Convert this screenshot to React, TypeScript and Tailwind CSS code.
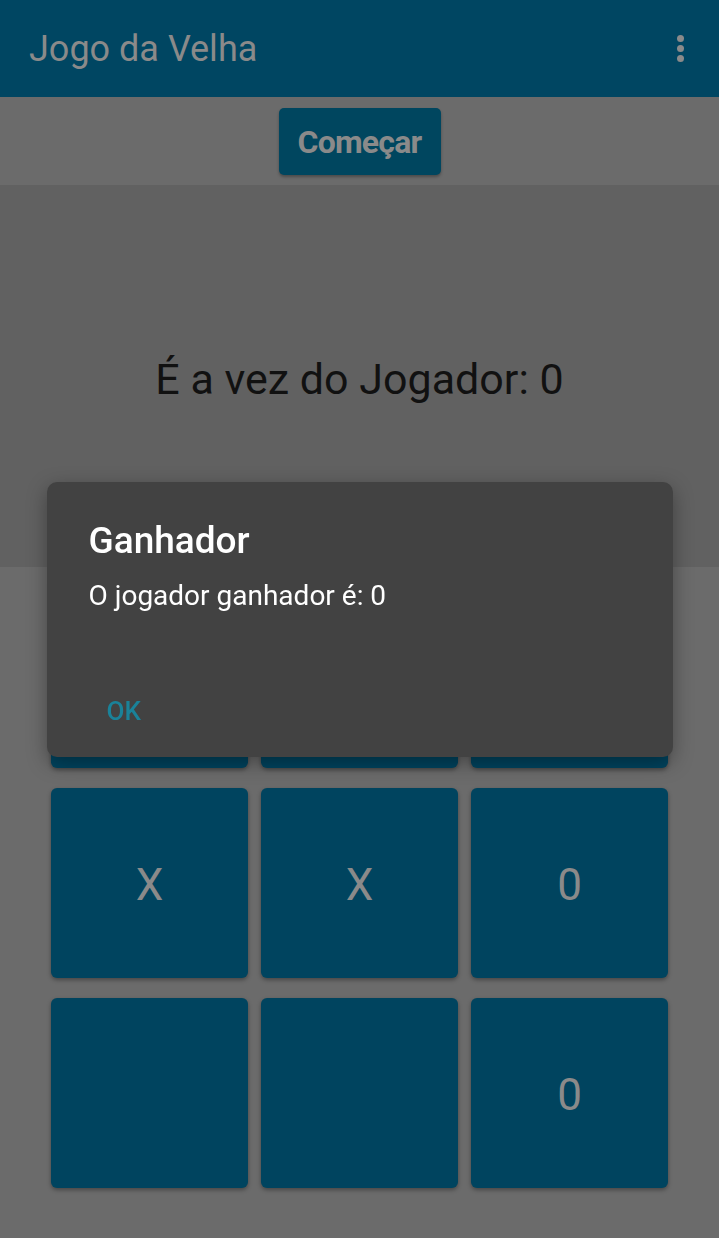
import { useState } from "react";

const cells = ["", "", "", "X", "X", "0", "", "", "0"];

export default function App() {
  const [open, setOpen] = useState(true);

  return (
    <div
      className="relative min-h-[1238px] w-full bg-[#6b6b6b] overflow-hidden"
      style={{ fontFamily: "Roboto, 'Noto Sans', sans-serif" }}
    >
      {/* App bar */}
      <header className="h-[97px] bg-[#004662] flex items-center justify-between pl-[29px] pr-[35px]">
        <h1 className="text-[36px] text-[#8a8a8a] leading-none">Jogo da Velha</h1>
        <div className="flex flex-col gap-[3px] items-center">
          <span className="w-[7px] h-[7px] rounded-full bg-[#8a8a8a]" />
          <span className="w-[7px] h-[7px] rounded-full bg-[#8a8a8a]" />
          <span className="w-[7px] h-[7px] rounded-full bg-[#8a8a8a]" />
        </div>
      </header>

      {/* Start button */}
      <div className="h-[88px] flex justify-center pt-[11px]">
        <button className="w-[162px] h-[67px] rounded-[5px] bg-[#00465f] shadow-[0_2px_3px_rgba(0,0,0,0.3)] text-[32px] font-bold text-[#8a8a8a] tracking-tight pt-[1px]">
          Começar
        </button>
      </div>

      {/* Turn text */}
      <div className="h-[382px] bg-[#616161] flex items-center justify-center">
        <p className="text-[43px] text-[#111111] mt-[6px]">É a vez do Jogador: 0</p>
      </div>

      {/* Board */}
      <div className="grid grid-cols-3 gap-x-[13px] gap-y-[20px] px-[51px] pt-[11px]">
        {cells.map((c, i) => (
          <div
            key={i}
            className="h-[190px] rounded-[6px] bg-[#00445f] shadow-[0_2px_4px_rgba(0,0,0,0.35)] flex items-center justify-center text-[44px] text-[#8a8a8a] pt-[4px]"
          >
            {c}
          </div>
        ))}
      </div>

      {/* Dialog */}
      {open && (
        <div className="fixed inset-0 flex items-center justify-center">
          <div className="w-[626px] h-[275px] rounded-[10px] bg-[#424242] shadow-[0_6px_20px_rgba(0,0,0,0.35)] flex flex-col pl-[42px] pt-[40px]">
            <h2 className="text-[37px] font-medium text-white leading-none">Ganhador</h2>
            <p className="text-[28px] text-white mt-[23px] leading-none">O jogador ganhador é: 0</p>
            <button
              onClick={() => setOpen(false)}
              className="self-start mt-[88px] ml-[18px] text-[26px] font-medium text-[#1a8299] leading-none"
            >
              OK
            </button>
          </div>
        </div>
      )}
    </div>
  );
}
